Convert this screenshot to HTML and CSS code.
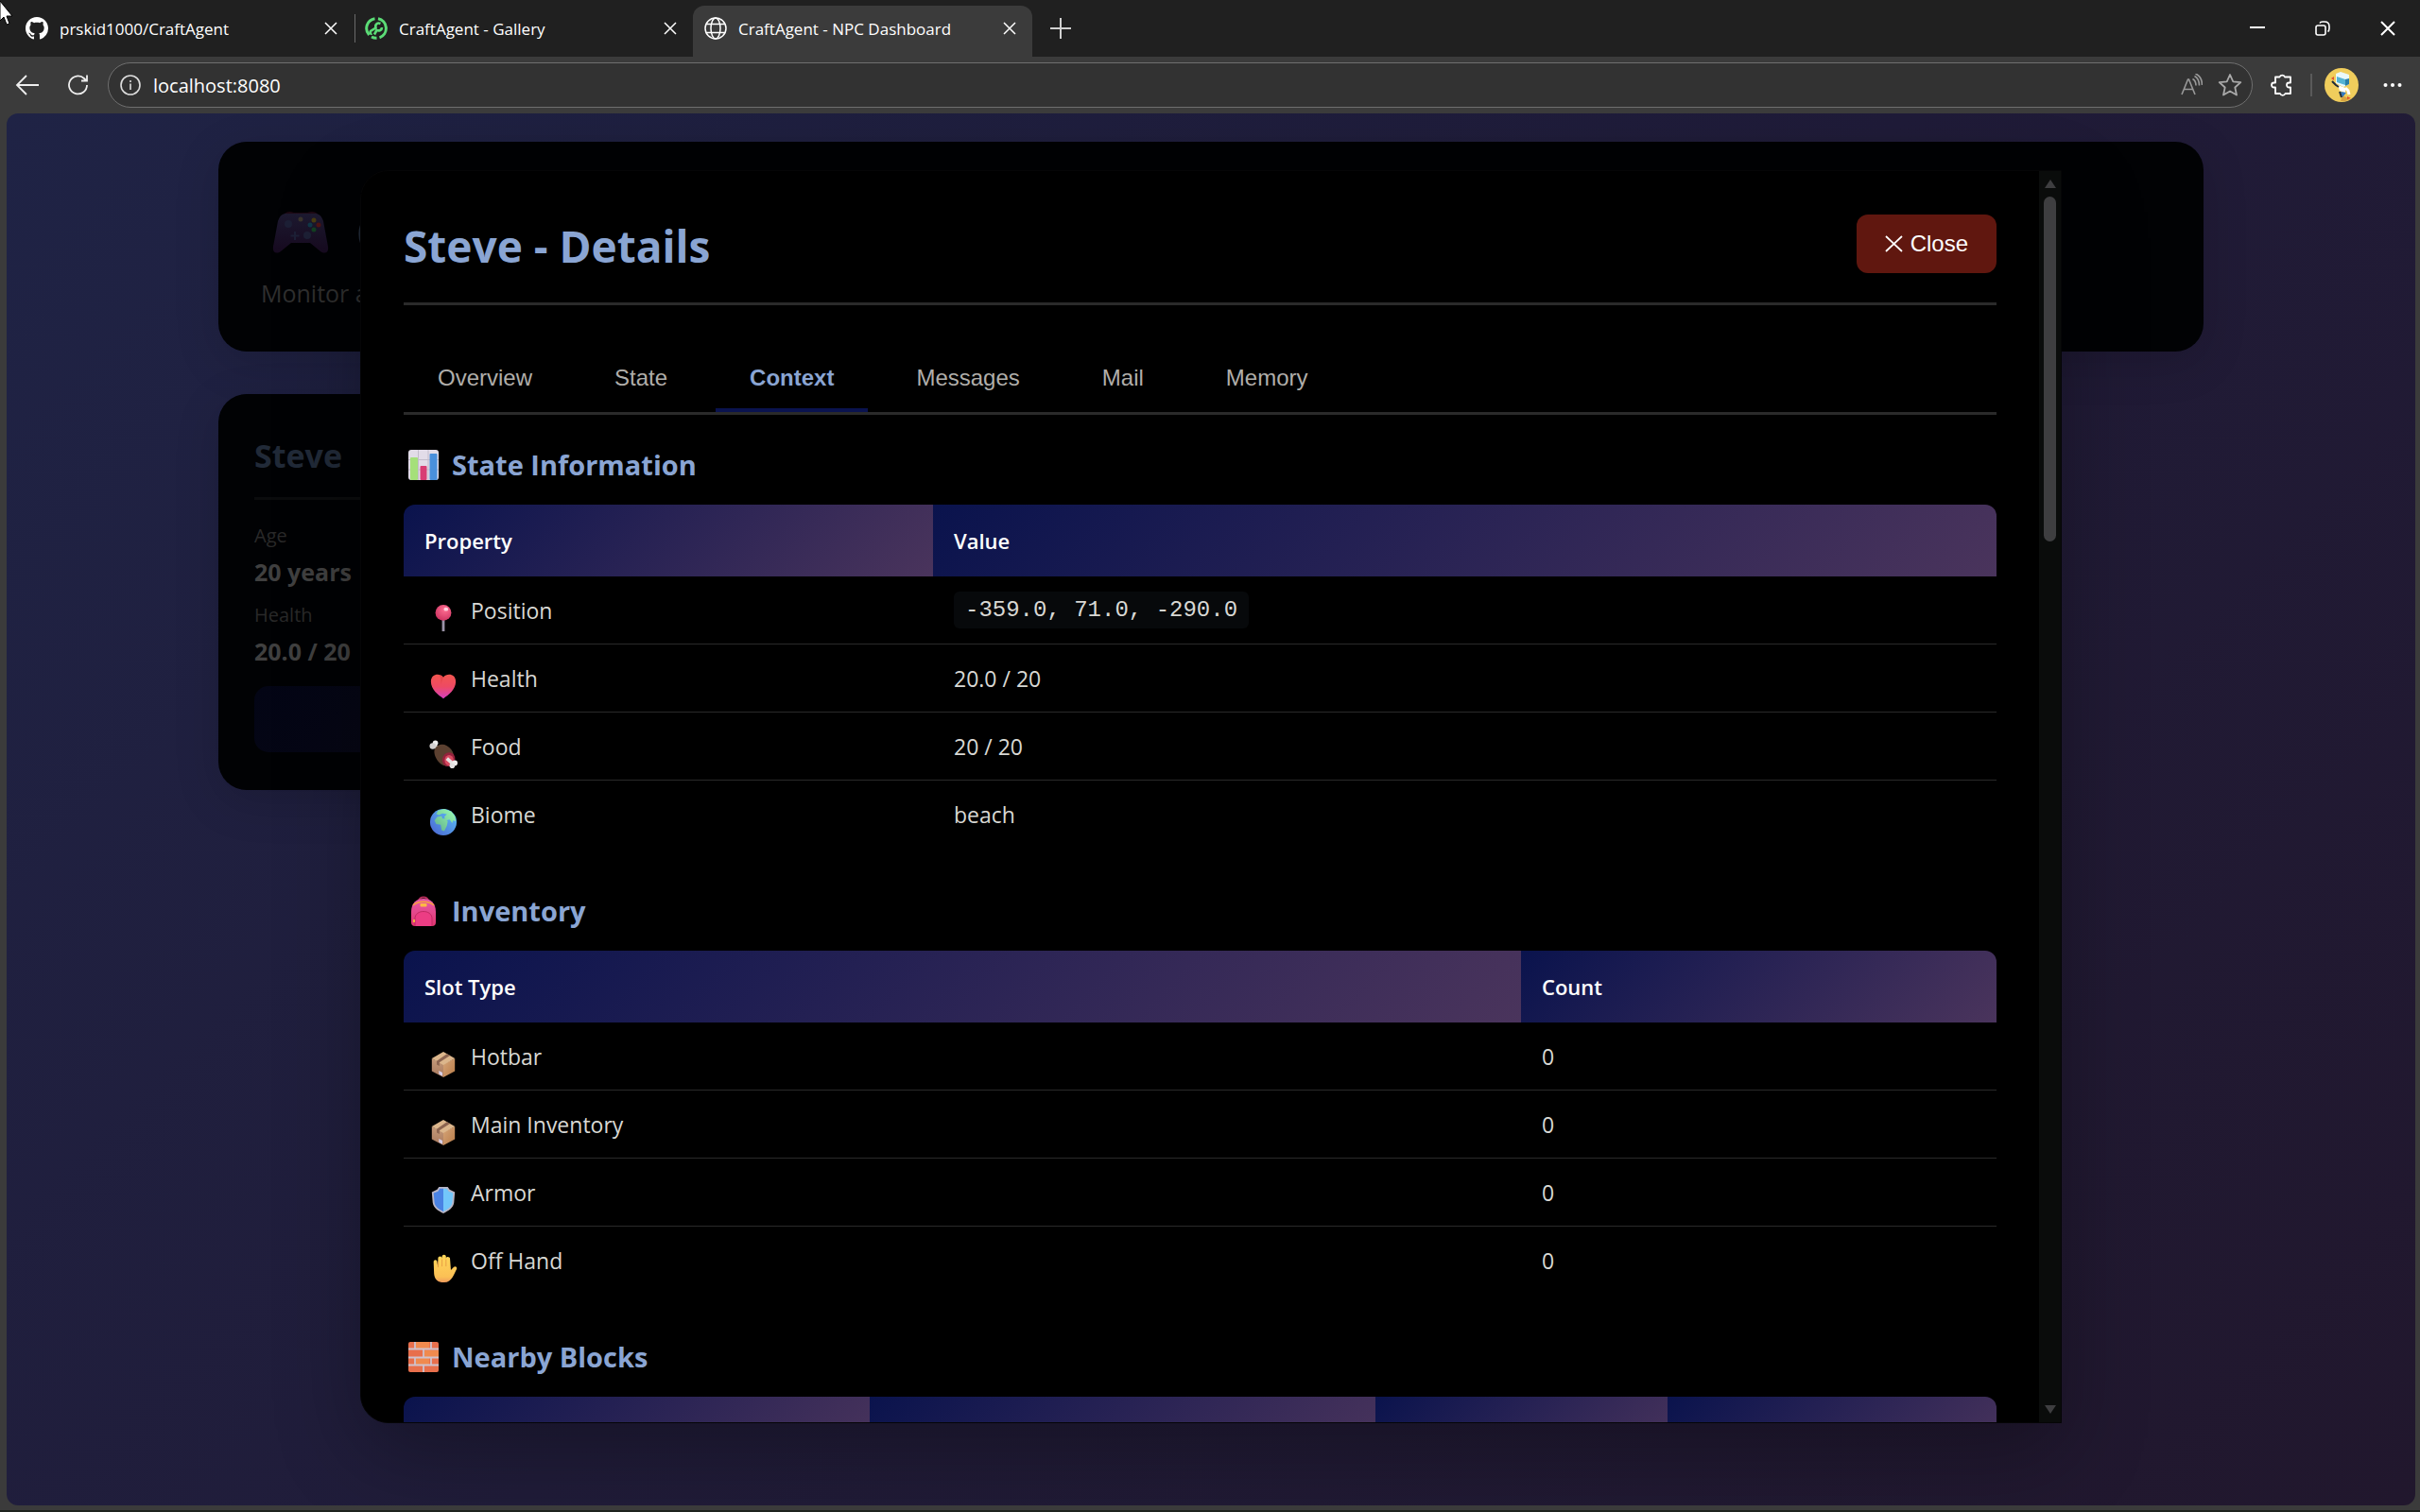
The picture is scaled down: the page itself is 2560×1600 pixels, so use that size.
FILE: index.html
```html
<!DOCTYPE html>
<html lang="en">
<head>
    <meta charset="UTF-8">
    <title>CraftAgent - NPC Dashboard</title>
    <link rel="stylesheet" href="styles.css">
</head>
<body>
    <svg class="defs" aria-hidden="true">
        <defs>
            <linearGradient id="gHeart" x1="0" y1="0" x2="0" y2="1"><stop offset="0" stop-color="#f2564f"/><stop offset=".5" stop-color="#ee4a63"/><stop offset="1" stop-color="#d83fc0"/></linearGradient>
            <linearGradient id="gGlobe" x1="1" y1="0" x2="0" y2="1"><stop offset="0" stop-color="#5cc4f8"/><stop offset="1" stop-color="#4a62d0"/></linearGradient>
            <linearGradient id="gLand" x1="1" y1="0" x2="0" y2="1"><stop offset="0" stop-color="#9dffb4"/><stop offset="1" stop-color="#5fae8c"/></linearGradient>
            <linearGradient id="gHand" x1="0" y1="0" x2="0" y2="1"><stop offset="0" stop-color="#ffd75a"/><stop offset=".8" stop-color="#fbc055"/><stop offset="1" stop-color="#ee9a5c"/></linearGradient>
            <linearGradient id="gBag" x1="0" y1="0" x2="0" y2="1"><stop offset="0" stop-color="#e85aa8"/><stop offset="1" stop-color="#e0356f"/></linearGradient>
            <linearGradient id="gPad" x1="0" y1="0" x2="0" y2="1"><stop offset="0" stop-color="#1d1a30"/><stop offset="1" stop-color="#170a20"/></linearGradient>
            <linearGradient id="gBoxL" x1="0" y1="0" x2="0" y2="1"><stop offset="0" stop-color="#c59a7a"/><stop offset="1" stop-color="#a97a5e"/></linearGradient>
            <linearGradient id="gBoxR" x1="0" y1="0" x2="1" y2="1"><stop offset="0" stop-color="#d6a57a"/><stop offset="1" stop-color="#b87c48"/></linearGradient>
            <radialGradient id="gPin" cx=".6" cy=".3" r=".7"><stop offset="0" stop-color="#ff6f92"/><stop offset="1" stop-color="#cf3563"/></radialGradient>
        </defs>
        <symbol id="close" viewBox="0 0 16 16"><path d="M2 2l12 12M14 2L2 14"/></symbol>
        <symbol id="box" viewBox="0 0 32 32">
            <path d="M3 9.5L16 16v15L3 24z" fill="url(#gBoxL)"/>
            <path d="M29 9.5L16 16v15l13-7z" fill="url(#gBoxR)"/>
            <path d="M3 9.500L16 2l13 7.500L16 17z" fill="#dcb68c"/>
            <path d="M20 4.500l3.500 2L11.500 14v4l-3-1.500v-4z" fill="#8c6450"/>
            <path d="M11 23.500l4 2v4l-4-2z" fill="#d8cfe6"/>
        </symbol>
    </svg>

    <header class="tabstrip">
        <div class="browser-tab">
            <svg class="favicon" viewBox="0 0 16 16" fill="#fff"><path d="M8 0C3.580 0 0 3.580 0 8c0 3.540 2.290 6.530 5.470 7.590.4.070.55-.17.55-.38 0-.19-.01-.82-.01-1.490-2.010.37-2.530-.49-2.690-.94-.09-.23-.48-.94-.82-1.130-.28-.15-.68-.52-.01-.53.63-.01 1.080.58 1.230.82.72 1.210 1.870.87 2.330.66.07-.52.28-.87.51-1.070-1.780-.2-3.640-.89-3.640-3.950 0-.87.31-1.590.82-2.150-.08-.2-.36-1.020.08-2.120 0 0 .67-.21 2.200.82.64-.18 1.320-.27 2-.27s1.360.09 2 .27c1.530-1.040 2.200-.82 2.200-.82.44 1.100.16 1.920.08 2.120.51.56.82 1.270.82 2.150 0 3.070-1.870 3.750-3.650 3.950.29.25.54.73.54 1.480 0 1.070-.01 1.930-.01 2.200 0 .21.15.46.55.38A8.010 8.010 0 0 0 16 8c0-4.420-3.580-8-8-8z"/></svg>
            <span class="tab-name">prskid1000/CraftAgent</span>
            <button class="icon-btn" aria-label="Close tab"><svg class="x-icon"><use href="#close"/></svg></button>
        </div>
        <div class="browser-tab divided">
            <svg class="favicon" viewBox="0 0 24 24" fill="none" stroke="#5bdc76" stroke-width="3"><path d="M10.500 1.700A10.400 10.400 0 0 0 4.500 19M7 21a10.400 10.400 0 0 0 5.500 1.300M14 1.800a10.400 10.400 0 0 1 1.500 20"/><path d="M16.500 7c-3.500-1.500-6 1-5 4.500L6 15c-1 1.500 0 3 1.500 2.500M18 11c0 3-3 4-5.500 3L10 18.500" stroke-width="2.600"/></svg>
            <span class="tab-name">CraftAgent - Gallery</span>
            <button class="icon-btn" aria-label="Close tab"><svg class="x-icon"><use href="#close"/></svg></button>
        </div>
        <div class="browser-tab current">
            <svg class="favicon" viewBox="0 0 24 24" fill="none" stroke="#fff" stroke-width="1.500"><circle cx="12" cy="12" r="11"/><ellipse cx="12" cy="12" rx="5" ry="11"/><path d="M2 7.500h20M2 16.500h20"/></svg>
            <span class="tab-name">CraftAgent - NPC Dashboard</span>
            <button class="icon-btn" aria-label="Close tab"><svg class="x-icon"><use href="#close"/></svg></button>
        </div>
        <button class="icon-btn new-tab" aria-label="New tab"><svg width="24" height="24" viewBox="0 0 24 24" stroke="#d0d0d0" stroke-width="2"><path d="M12 1v22M1 12h22"/></svg></button>
        <div class="window-buttons">
            <button class="icon-btn" aria-label="Minimize"><svg width="16" height="16" viewBox="0 0 16 16" stroke="#fff" stroke-width="2"><path d="M0 7h16"/></svg></button>
            <button class="icon-btn" aria-label="Restore"><svg width="16" height="16" viewBox="0 0 16 16" fill="none" stroke="#fff" stroke-width="1.600"><rect x="1" y="5" width="10" height="10" rx="2"/><path d="M5 2.500C5.500 1 7 1 8 1h2c3 0 5 2 5 5v2c0 1.500-.5 3-1.500 3.500"/></svg></button>
            <button class="icon-btn" aria-label="Close window"><svg width="16" height="16" viewBox="0 0 16 16" stroke="#fff" stroke-width="2"><path d="M1 1l14 14M15 1L1 15"/></svg></button>
        </div>
    </header>

    <nav class="toolbar">
        <button class="icon-btn" aria-label="Back"><svg width="26" height="24" viewBox="0 0 26 24" fill="none" stroke="#eee" stroke-width="1.800"><path d="M25 12H2M12 2L2 12l10 10"/></svg></button>
        <button class="icon-btn" aria-label="Reload"><svg width="24" height="24" viewBox="0 0 24 24" fill="none" stroke="#eee" stroke-width="1.800"><path d="M21 12a9.500 9.500 0 1 1-3-7l2.500 2.500M21 1.500v6h-6"/></svg></button>
        <div class="address">
            <svg width="22" height="22" viewBox="0 0 22 22" fill="none" stroke="#ddd" stroke-width="1.600"><circle cx="11" cy="11" r="10"/><path d="M11 9.500v6.500M11 6v2"/></svg>
            <input type="text" value="localhost:8080" aria-label="Address">
            <button class="icon-btn" aria-label="Read aloud"><svg width="24" height="24" viewBox="0 0 24 24" fill="none" stroke="#999" stroke-width="1.600"><path d="M2 22L8.500 6h1L16 22M4.500 16.500H13.500M13.500 5.500c2.500 1.500 3.500 4 3.500 7M15.500 2.500c3.500 2 5 5.500 5 10M16.500 0c4.500 2 7 6.500 7 12"/></svg></button>
            <button class="icon-btn" aria-label="Favorite"><svg width="26" height="26" viewBox="0 0 26 26" fill="none" stroke="#aaa" stroke-width="1.800" stroke-linejoin="round"><path d="M13 2l3.300 7.300 8 .9-6 5.300 1.700 8L13 19.500 6 23.500l1.700-8-6-5.300 8-.9z"/></svg></button>
        </div>
        <button class="icon-btn" aria-label="Extensions"><svg width="26" height="26" viewBox="0 0 26 26" fill="none" stroke="#fff" stroke-width="1.800" stroke-linejoin="round"><path d="M6 4.500h4.500a3 3 0 0 1 5.500 0H22v6h-1.500a2.500 2.500 0 0 0 0 5H22v6.500h-5.500a3 3 0 0 1-5.500 0H6v-6.500H4.500a2.500 2.500 0 0 1 0-5H6z"/></svg></button>
        <span class="bar"></span>
        <button class="icon-btn" aria-label="Profile"><svg width="36" height="36" viewBox="0 0 36 36"><circle cx="18" cy="18" r="18" fill="#f0cd5c"/><path d="M19 29l8 4-5 2h-5z" fill="#d9a440"/><path d="M12 6l5-2 9 3v10l-6 3-8-4z" fill="#eaf8fb"/><path d="M13 9l9 3v6l-9-3z" fill="#55b3d3"/><path d="M22 12l4-1v6l-4 2z" fill="#2a7fa8"/><path d="M14 18l8 3v5l-6-2z" fill="#fff"/><path d="M8 14l4 4 3 2" stroke="#1f2a38" stroke-width="2" fill="none"/><path d="M17 25l2 6 4-5" fill="#2f79c4"/><path d="M22 21l3 3 1 4" stroke="#fff" stroke-width="3" fill="none"/><path d="M7 11l3-2v4zM24 30l4 2-4 1z" fill="#e2522f"/><path d="M16 25l2 6" stroke="#1c2b3b" stroke-width="2"/></svg></button>
        <button class="icon-btn" aria-label="Settings and more"><svg width="20" height="6" viewBox="0 0 20 6" fill="#fff"><circle cx="2.500" cy="3" r="2"/><circle cx="10" cy="3" r="2"/><circle cx="17.500" cy="3" r="2"/></svg></button>
    </nav>

    <div class="viewport">
        <main class="container">
            <section class="page-header">
                <h1>
                    <svg class="gamepad" viewBox="0 0 60 48" preserveAspectRatio="none"><path d="M12 6c1-4 7-5 11-3l14 0c5-2 10-1 12 3z" fill="#1e0914"/><path d="M6 12C8 6 11 4 15 4h30c4 0 7 2 9 8l5 27c1 7-4 8-8 5L40 35H20L9 44c-4 3-9 2-8-5z" fill="url(#gPad)"/><circle cx="17" cy="15" r="4" fill="#1d2036"/><circle cx="37" cy="27" r="4" fill="#1d2036"/><path d="M24 23v9M19.500 27.500h9" stroke="#1d2036" stroke-width="2"/><circle cx="30" cy="10" r="2.500" fill="#3a342c"/><circle cx="44" cy="11" r="2.500" fill="#4a3d10"/><circle cx="40" cy="16" r="2.500" fill="#103848"/><circle cx="49" cy="16" r="2.500" fill="#4f1414"/><circle cx="44" cy="21" r="2.500" fill="#134022"/></svg>
                    CraftAgent
                </h1>
                <p>Monitor and manage</p>
            </section>
            <div class="npc-grid">
                <article class="npc-card">
                    <h2>Steve</h2>
                    <dl>
                        <dt>Age</dt><dd>20 years</dd>
                        <dt>Health</dt><dd>20.0 / 20</dd>
                    </dl>
                    <button class="details-btn" aria-label="Details"></button>
                </article>
            </div>
        </main>

        <div class="overlay">
            <div class="modal" role="dialog" aria-labelledby="modal-title">
                <div class="modal-content">
                    <div class="modal-header">
                        <h2 id="modal-title">Steve - Details</h2>
                        <button class="close-btn"><svg width="20" height="18" viewBox="0 0 20 18" stroke="#fff" stroke-width="1.800"><path d="M1 1l17 16M18 1L1 17"/></svg>Close</button>
                    </div>
                    <div class="tabs" role="tablist">
                        <button class="tab" role="tab">Overview</button>
                        <button class="tab" role="tab">State</button>
                        <button class="tab active" role="tab">Context</button>
                        <button class="tab" role="tab">Messages</button>
                        <button class="tab" role="tab">Mail</button>
                        <button class="tab" role="tab">Memory</button>
                    </div>

                    <h3><svg class="title-icon" viewBox="0 0 32 32"><rect width="32" height="32" rx="3" fill="#e2dce8"/><path d="M10.500 0v32M21 0v32M0 10.500h32M0 21h32" stroke="#c3bccb" stroke-width="1"/><rect x="2" y="8" width="8" height="24" rx="1" fill="#a5e07a"/><rect x="12.500" y="17" width="7" height="15" rx="1" fill="#d83c73"/><rect x="22.500" y="4" width="8" height="28" rx="1" fill="#4a90dc"/></svg>State Information</h3>
                    <table>
                        <colgroup><col class="c-prop"><col></colgroup>
                        <thead><tr><th>Property</th><th>Value</th></tr></thead>
                        <tbody>
                            <tr><td><div class="label"><svg class="row-icon" viewBox="0 0 32 32"><rect x="14.500" y="16" width="3" height="15" fill="#9b93a8"/><circle cx="16" cy="10" r="9" fill="url(#gPin)"/><ellipse cx="19" cy="6" rx="2.500" ry="2" fill="#ffd0de"/></svg>Position</div></td><td><code>-359.0, 71.0, -290.0</code></td></tr>
                            <tr><td><div class="label"><svg class="row-icon" viewBox="0 0 32 32"><path d="M16 30C10 26 2 20 2 11 2 2 12 1 16 6 20 1 30 2 30 11c0 9-8 15-14 19z" fill="url(#gHeart)"/><path d="M16 6c-2-2-4-3-6-3 3 2 4 6 3 11z" fill="#d8363e" opacity=".4"/></svg>Health</div></td><td>20.0 / 20</td></tr>
                            <tr><td><div class="label"><svg class="row-icon" viewBox="0 0 32 32"><path d="M6 6l5 5" stroke="#ddd" stroke-width="4"/><circle cx="7" cy="3.500" r="3" fill="#eee"/><circle cx="4" cy="7" r="3.500" fill="#d2d0d0"/><path d="M7 9c4-6 13-5 18 2s4 16-1 18-11-1-14-5S4 13 7 9z" fill="#5b4030"/><ellipse cx="22" cy="22" rx="7" ry="8" transform="rotate(25 22 22)" fill="#94223c"/><ellipse cx="22.500" cy="23" rx="5" ry="6" fill="#d84a60"/><path d="M20 21l7 6" stroke="#e6e2e2" stroke-width="4"/><circle cx="29" cy="26" r="3" fill="#f0eeee"/><circle cx="26" cy="29" r="3" fill="#e3e1e1"/></svg>Food</div></td><td>20 / 20</td></tr>
                            <tr><td><div class="label"><svg class="row-icon" viewBox="0 0 32 32"><circle cx="16" cy="16" r="15" fill="url(#gGlobe)"/><path d="M6 14l3-4 5-1 1 3 3 0 3 3-1 5-3 6-3-1-1-6-5-1zM10 3l7-2 8 3 4 5 1 6-3-1-1 3-3-4-4 1-2-4 3-3-5-1-4 2-3-1z" fill="url(#gLand)"/></svg>Biome</div></td><td>beach</td></tr>
                        </tbody>
                    </table>

                    <h3><svg class="title-icon" viewBox="0 0 32 32"><path d="M11 6c0-6 10-6 10 0" stroke="#b32d5a" stroke-width="2" fill="none"/><path d="M3 17C3 7 9 3 16 3s13 4 13 14v11q0 4-4 4H7q-4 0-4-4z" fill="url(#gBag)"/><path d="M5 10c5-5 17-5 22 0" stroke="#f6a43e" stroke-width="1.500" fill="none"/><path d="M7 32V24c0-10 18-10 18 0v8" fill="#ec3d84" stroke="#c02a62" stroke-width="1"/><rect x="12.500" y="8" width="7" height="3.500" rx="1" fill="#fcb944"/><path d="M6 25v3" stroke="#f4b140" stroke-width="2"/></svg>Inventory</h3>
                    <table>
                        <colgroup><col class="c-slot"><col></colgroup>
                        <thead><tr><th>Slot Type</th><th>Count</th></tr></thead>
                        <tbody>
                            <tr><td><div class="label"><svg class="row-icon"><use href="#box"/></svg>Hotbar</div></td><td>0</td></tr>
                            <tr><td><div class="label"><svg class="row-icon"><use href="#box"/></svg>Main Inventory</div></td><td>0</td></tr>
                            <tr><td><div class="label"><svg class="row-icon" viewBox="0 0 32 32"><path d="M16 1h5l2 3 6 3-1 12c-1 6-6 9-12 12C10 28 5 25 4 19L3 7l6-3 2-3z" fill="#b9b6c6"/><path d="M16 3h-4L10 6 5 8l1 11c1 5 5 7 10 10z" fill="#4a83e4"/><path d="M16 3h4l2 3 5 2-1 11c-1 5-5 7-10 10z" fill="#73c7fb"/></svg>Armor</div></td><td>0</td></tr>
                            <tr><td><div class="label"><svg class="row-icon" viewBox="0 0 32 32"><path d="M5 9c0-3 4-3 4 0l1 6V5c0-3 4.500-3 4.500 0V3c0-3 4.500-3 4.500 0v2c0-3 4.500-2 4.500 0l1 13 3-3c2-2 4.500 0 3.500 2-3 5-5 15-14 15C9 32 6 28 5.500 22z" fill="url(#gHand)"/><path d="M10 8v7M14.500 6v8M19 6v8" stroke="#e79d44" stroke-width="1"/></svg>Off Hand</div></td><td>0</td></tr>
                        </tbody>
                    </table>

                    <h3><svg class="title-icon" viewBox="0 0 32 32"><rect width="32" height="32" rx="2" fill="#e86f4c"/><path d="M8 0h14v7H8zM17 9h15v7H17zM8 17h14v7H8z" fill="#f08a4e"/><path d="M0 7.500h32M0 16.500h32M0 24.500h32M7 0v7.500M24 0v7.500M16 7.500v9M7 16.500v8M24 16.500v8M16 24.500V32" stroke="#cfc2cc" stroke-width="1.800"/></svg>Nearby Blocks</h3>
                    <table>
                        <colgroup><col class="c-block"><col class="c-pos"><col class="c-dist"><col></colgroup>
                        <thead><tr><th></th><th></th><th></th><th></th></tr></thead>
                    </table>
                </div>
                <div class="scrollbar" aria-hidden="true">
                    <svg width="12" height="10" viewBox="0 0 12 10"><path d="M6 0l6 9H0z"/></svg>
                    <div class="track"><div class="thumb"></div></div>
                    <svg width="12" height="10" viewBox="0 0 12 10"><path d="M6 10l6-9H0z"/></svg>
                </div>
            </div>
        </div>
    </div>
    <svg class="cursor" width="14" height="27" viewBox="0 0 14 27"><path d="M0 1v21l4-4 3 8 3-1-3-8h6z" fill="#fff" stroke="#000" stroke-width="1"/></svg>
</body>
</html>
```
FILE: styles.css
```css
* {
    margin: 0;
    padding: 0;
    box-sizing: border-box;
}

body {
    height: 100vh;
    display: flex;
    flex-direction: column;
    overflow: hidden;
    background: #3b3b3b;
    border-bottom: 2px solid #1e231e;
    color: #d8d8d4;
    font-family: "Open Sans", "Noto Sans", sans-serif;
    font-size: 23px;
}

button {
    border: 0;
    background: none;
    font-family: "Liberation Sans", Arial, sans-serif;
    font-size: 24px;
    color: inherit;
}

svg {
    flex-shrink: 0;
}

.defs {
    position: absolute;
    width: 0;
    height: 0;
}

/* browser frame */
.tabstrip {
    display: flex;
    align-items: flex-end;
    height: 60px;
    padding-left: 15px;
    background: #202020;
}

.browser-tab {
    display: flex;
    align-items: center;
    gap: 12px;
    width: 359px;
    height: 54px;
    padding: 0 16px 6px 12px;
    color: #fff;
    font-size: 17px;
    position: relative;
}

.browser-tab.current {
    background: #3b3b3b;
    border-radius: 12px 12px 0 0;
}

.browser-tab.divided::before {
    content: "";
    position: absolute;
    left: 1px;
    top: 9px;
    width: 1px;
    height: 30px;
    background: #6a6a6a;
}

.favicon {
    width: 24px;
    height: 24px;
}

.tab-name {
    flex: 1;
    white-space: nowrap;
}

.icon-btn {
    display: flex;
    align-items: center;
    justify-content: center;
}

.x-icon {
    width: 16px;
    height: 16px;
    stroke: #fff;
    stroke-width: 1.5;
}

.new-tab {
    width: 60px;
    height: 60px;
}

.window-buttons {
    display: flex;
    height: 60px;
    margin-left: auto;
}

.window-buttons .icon-btn {
    width: 69px;
}

.toolbar {
    display: flex;
    align-items: center;
    height: 60px;
    padding: 0 19px 0 16px;
}

.toolbar > .icon-btn:nth-child(2) {
    margin: 0 19px 0 29px;
}

.address {
    flex: 1;
    display: flex;
    align-items: center;
    gap: 16px;
    height: 48px;
    margin-right: 18px;
    padding: 0 10px 0 12px;
    background: #323232;
    border: 1px solid #6f6f6f;
    border-radius: 24px;
}

.address input {
    flex: 1;
    margin-left: -3px;
    border: 0;
    background: none;
    color: #fff;
    font: 20px "Open Sans", "Noto Sans", sans-serif;
}

.bar {
    width: 2px;
    height: 24px;
    margin: 0 13px 0 17px;
    background: #5a5a5a;
}

.toolbar > .icon-btn:last-child {
    margin-left: 26px;
}

.viewport {
    flex: 1;
    min-height: 0;
    position: relative;
    margin: 0 5px 5px 7px;
    border-radius: 12px;
    overflow: hidden;
    background: linear-gradient(135deg, #1f2345 0%, #201c39 50%, #21172d 100%);
}

/* dashboard behind the dialog */
.container {
    max-width: 2100px;
    margin: 0 auto;
    padding-top: 30px;
}

.page-header {
    height: 222px;
    margin-bottom: 45px;
    padding: 45px;
    background: #010204;
    border-radius: 30px;
    box-shadow: 0 12px 48px rgba(0, 0, 0, 0.15);
}

.page-header h1 {
    display: flex;
    align-items: center;
    gap: 28px;
    height: 97px;
    padding: 4px 0 0 12px;
    color: #212a38;
    font-size: 58px;
}

.gamepad {
    width: 60px;
    height: 48px;
}

.page-header p {
    color: #2f2f2f;
    font-size: 25px;
    line-height: 36px;
}

.npc-grid {
    display: grid;
    grid-template-columns: repeat(3, 1fr);
    gap: 36px;
}

.npc-card {
    padding: 38px 38px 40px;
    background: #010204;
    border-radius: 30px;
    box-shadow: 0 12px 48px rgba(0, 0, 0, 0.15);
}

.npc-card h2 {
    padding-bottom: 17px;
    border-bottom: 3px solid #0b0c0d;
    color: #212a38;
    font-size: 34px;
    line-height: 54px;
}

.npc-card dl {
    margin: 21px 0 16px;
}

.npc-card dt {
    color: #292929;
    font-size: 20px;
    line-height: 34px;
}

.npc-card dd {
    margin-bottom: 8px;
    color: #404040;
    font-size: 25px;
    font-weight: bold;
    line-height: 42px;
}

.details-btn {
    display: block;
    width: 100%;
    height: 70px;
    background: linear-gradient(135deg, #030515, #0e0a12);
    border-radius: 15px;
}

/* dialog */
.overlay {
    position: absolute;
    inset: 0;
    display: flex;
    justify-content: center;
    padding: 60px 0 87px;
}

.modal {
    display: flex;
    width: 100%;
    max-width: 1800px;
    background: #000;
    border: 1px solid #050506;
    border-radius: 30px 0 0 30px;
    box-shadow: 0 30px 90px rgba(0, 0, 0, 0.3);
    overflow: hidden;
}

.modal-content {
    flex: 1;
    padding: 46px 45px 0;
    overflow: hidden;
}

.modal-header {
    display: flex;
    justify-content: space-between;
    align-items: flex-start;
    padding-bottom: 27px;
    margin-bottom: 45px;
    border-bottom: 3px solid #2a2a2a;
}

.modal-header h2 {
    color: #8aa5d3;
    font-size: 46px;
    line-height: 66px;
}

.close-btn {
    display: flex;
    align-items: center;
    gap: 7px;
    height: 62px;
    padding: 0 30px;
    background: #60170f;
    border-radius: 12px;
    color: #fff;
}

.tabs {
    display: flex;
    gap: 15px;
    margin-bottom: 32px;
    border-bottom: 3px solid #2a2a2a;
}

.tab {
    height: 68px;
    padding: 0 36px;
    border-bottom: 4px solid transparent;
    color: #b0aeaa;
}

.tab.active {
    border-bottom-color: #0a134f;
    color: #8aa5d3;
    font-weight: bold;
}

h3 {
    display: flex;
    align-items: center;
    gap: 14px;
    margin-bottom: 21px;
    padding-left: 5px;
    color: #8aa5d3;
    font-size: 29px;
    line-height: 42px;
}

.title-icon {
    width: 32px;
    height: 32px;
}

table {
    width: 100%;
    margin-bottom: 45px;
    border-collapse: separate;
    border-spacing: 0;
    border-radius: 12px 12px 0 0;
    overflow: hidden;
    table-layout: fixed;
}

.c-prop { width: 560px; }
.c-slot { width: 1182px; }
.c-block { width: 493px; }
.c-pos { width: 535px; }
.c-dist { width: 309px; }

th {
    height: 76px;
    padding: 0 22px;
    background: linear-gradient(135deg, #0a134d, #4a345c);
    color: #fff;
    font-size: 22px;
    font-weight: 600;
    text-align: left;
}

td {
    height: 72px;
    padding: 0 22px;
    border-bottom: 1px solid #2a2a2a;
}

tr:last-child td {
    border-bottom-color: transparent;
}

.label {
    display: flex;
    align-items: center;
    gap: 14px;
    padding-left: 5px;
}

.row-icon {
    width: 30px;
    height: 30px;
    margin-top: 16px;
}

code {
    display: inline-block;
    padding: 0 12px;
    background: #07090b;
    border-radius: 6px;
    font-family: "Liberation Mono", monospace;
    font-size: 24px;
    line-height: 39px;
    vertical-align: middle;
}

.scrollbar {
    display: flex;
    flex-direction: column;
    align-items: center;
    width: 23px;
    padding: 9px 0;
    background: #0a0c0b;
}

.scrollbar svg {
    fill: #3e3e40;
}

.track {
    flex: 1;
    margin: 8px 0;
}

.thumb {
    width: 13px;
    height: 365px;
    background: #3e3e40;
    border-radius: 7px;
}

.cursor {
    position: absolute;
    left: 0;
    top: 0;
}
```
